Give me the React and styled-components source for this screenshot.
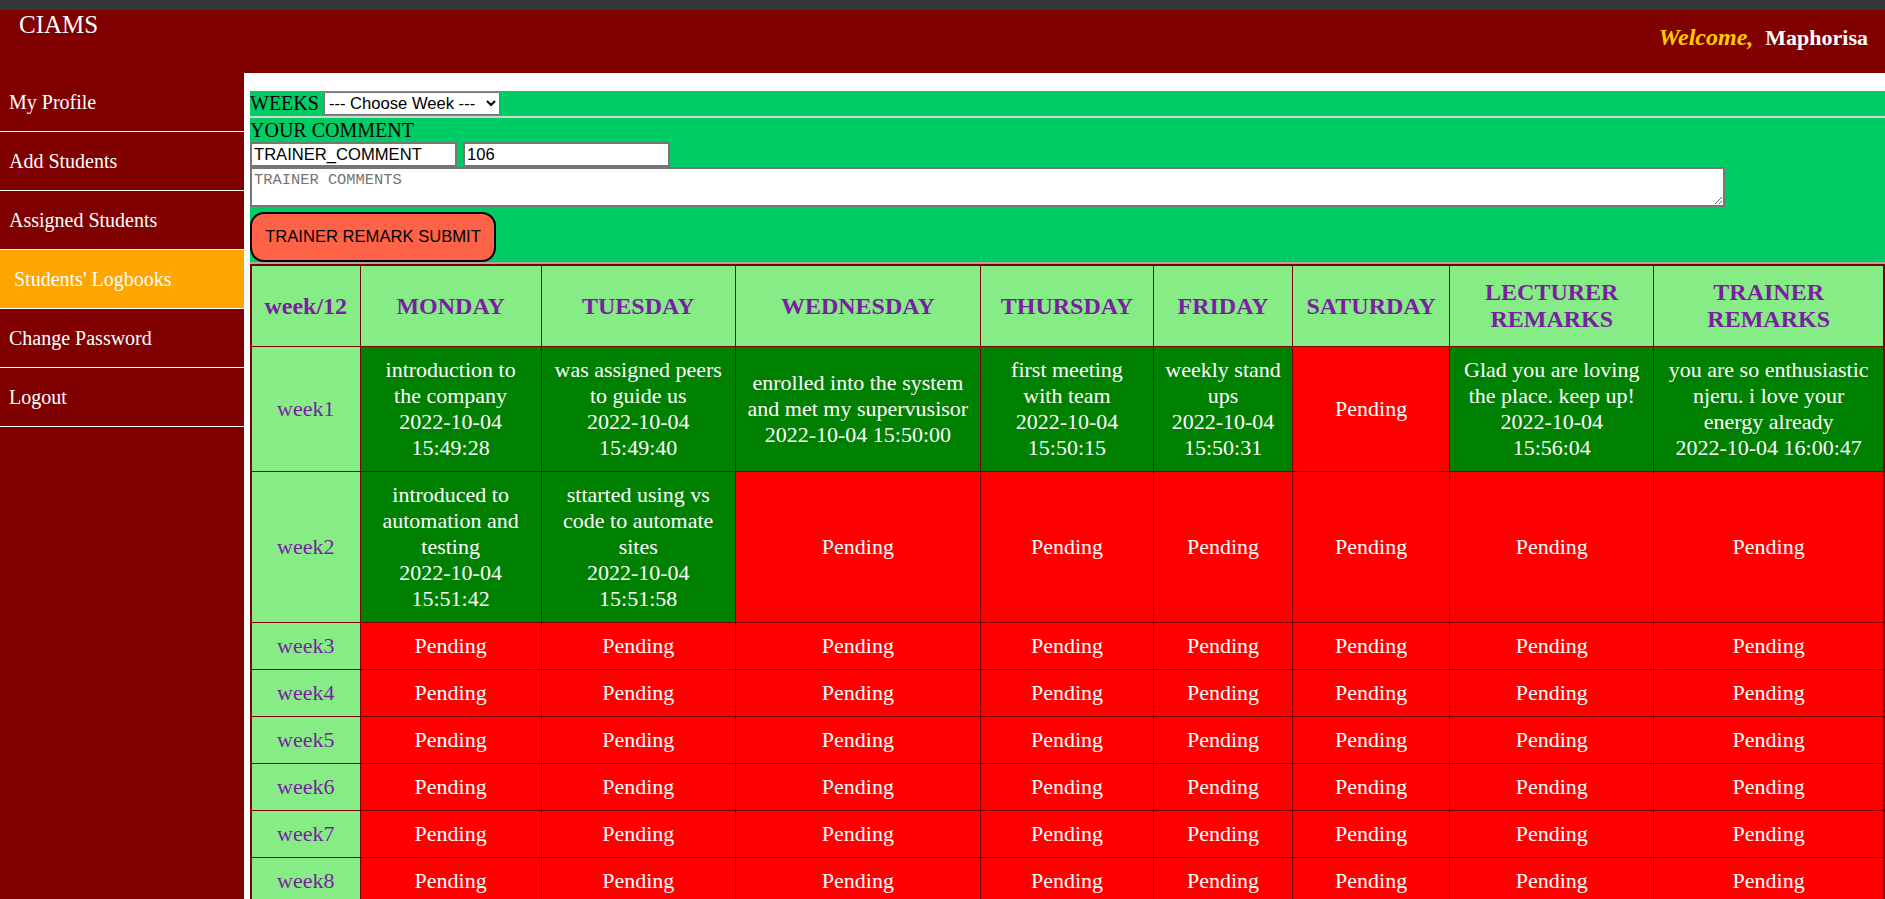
import React from 'react';
import styled, { createGlobalStyle } from 'styled-components';

const days = ['MONDAY', 'TUESDAY', 'WEDNESDAY', 'THURSDAY', 'FRIDAY', 'SATURDAY'];
const colWidths = [109, 181, 194, 245, 173, 139, 157, 204, 230];

const navLinks = ['My Profile', 'Add Students', 'Assigned Students', "Students' Logbooks", 'Change Password', 'Logout'];

const logbook = [
    {
        week: 'week1',
        entries: [
            { text: 'introduction to the company', date: '2022-10-04 15:49:28' },
            { text: 'was assigned peers to guide us', date: '2022-10-04 15:49:40' },
            { text: 'enrolled into the system and met my supervusisor', date: '2022-10-04 15:50:00' },
            { text: 'first meeting with team', date: '2022-10-04 15:50:15' },
            { text: 'weekly stand ups', date: '2022-10-04 15:50:31' },
            null,
            { text: 'Glad you are loving the place. keep up!', date: '2022-10-04 15:56:04' },
            { text: 'you are so enthusiastic njeru. i love your energy already', date: '2022-10-04 16:00:47' },
        ],
    },
    {
        week: 'week2',
        entries: [
            { text: 'introduced to automation and testing', date: '2022-10-04 15:51:42' },
            { text: 'sttarted using vs code to automate sites', date: '2022-10-04 15:51:58' },
            null, null, null, null, null, null,
        ],
    },
];

for (let i = 3; i <= 12; i++) {
    logbook.push({ week: 'week' + i, entries: Array(8).fill(null) });
}

const App = () => {
    return (
        <Page>
            <GlobalStyle />
            <ChromeStrip />
            <TopBar>
                <Brand>CIAMS</Brand>
                <Greeting>
                    <Welcome>Welcome,</Welcome>
                    <UserName>Maphorisa</UserName>
                </Greeting>
            </TopBar>
            <Body>
                <Sidebar>
                    {navLinks.map((link) => (
                        <NavItem key={link} $active={link === "Students' Logbooks"}>{link}</NavItem>
                    ))}
                </Sidebar>
                <Main>
                    <RemarkForm>
                        <WeeksRow>
                            <FormLabel>WEEKS</FormLabel>
                            <WeekSelect defaultValue="">
                                <option value="">--- Choose Week ---</option>
                                {logbook.map((row) => (
                                    <option key={row.week} value={row.week}>{row.week}</option>
                                ))}
                            </WeekSelect>
                        </WeeksRow>
                        <CommentLabel>YOUR COMMENT</CommentLabel>
                        <FieldRow>
                            <TextInput defaultValue="TRAINER_COMMENT" />
                            <TextInput defaultValue="106" />
                        </FieldRow>
                        <CommentBox placeholder="TRAINER COMMENTS" />
                        <SubmitButton>TRAINER REMARK SUBMIT</SubmitButton>
                    </RemarkForm>
                    <LogTable>
                        <colgroup>
                            {colWidths.map((w, i) => (
                                <col key={i} style={{ width: w }} />
                            ))}
                        </colgroup>
                        <thead>
                            <tr>
                                <HeadCell>week/12</HeadCell>
                                {days.map((d) => (
                                    <HeadCell key={d}>{d}</HeadCell>
                                ))}
                                <HeadCell>LECTURER REMARKS</HeadCell>
                                <HeadCell>TRAINER REMARKS</HeadCell>
                            </tr>
                        </thead>
                        <tbody>
                            {logbook.map((row) => (
                                <tr key={row.week}>
                                    <WeekCell>{row.week}</WeekCell>
                                    {row.entries.map((entry, i) => (
                                        <EntryCell key={i} $done={!!entry}>
                                            {entry ? (
                                                <>
                                                    {entry.text}
                                                    <br />
                                                    {entry.date}
                                                </>
                                            ) : 'Pending'}
                                        </EntryCell>
                                    ))}
                                </tr>
                            ))}
                        </tbody>
                    </LogTable>
                </Main>
            </Body>
        </Page>
    );
};

//Styles:
const GlobalStyle = createGlobalStyle`
    html, body {
        margin: 0;
        padding: 0;
        overflow: hidden;
    }
    body {
        font-family: 'Liberation Serif', 'Times New Roman', serif;
        background: #fff;
    }
    * {
        box-sizing: border-box;
    }
`;

const Page = styled.div`
    height: 100vh;
    display: flex;
    flex-direction: column;
    overflow: hidden;
`;

const ChromeStrip = styled.div`
    height: 10px;
    flex-shrink: 0;
    background: #35363a;
`;

const TopBar = styled.header`
    height: 63px;
    flex-shrink: 0;
    display: flex;
    justify-content: space-between;
    align-items: flex-start;
    padding: 0 17px 0 19px;
    background: #800000;
`;

const Brand = styled.div`
    color: #fff;
    font-size: 25px;
    line-height: 27px;
    margin-top: 1px;
`;

const Greeting = styled.div`
    margin-top: 14px;
    font-size: 22px;
    line-height: 26px;
    font-weight: bold;
`;

const Welcome = styled.span`
    color: #ffcc00;
    font-style: italic;
    font-size: 24px;
`;

const UserName = styled.span`
    color: #fff;
    margin-left: 12px;
`;

const Body = styled.div`
    flex: 1;
    display: flex;
    min-height: 0;
`;

const Sidebar = styled.nav`
    width: 244px;
    flex-shrink: 0;
    background: #800000;
`;

const NavItem = styled.div`
    height: 59px;
    display: flex;
    align-items: center;
    padding-left: ${(p) => (p.$active ? '14px' : '9px')};
    border-bottom: 1px solid #fff;
    background: ${(p) => (p.$active ? '#ffa500' : 'transparent')};
    color: #fff;
    font-size: 20px;
`;

const Main = styled.main`
    flex: 1;
    min-width: 0;
    padding: 18px 0 0 6px;
    background: #fff;
    overflow: hidden;
`;

const RemarkForm = styled.form`
    display: flex;
    flex-direction: column;
    align-items: flex-start;
    background: #00cc66;
    border-bottom: 2px solid #a9a9a9;
`;

const WeeksRow = styled.div`
    align-self: stretch;
    height: 27px;
    display: flex;
    align-items: center;
    gap: 5px;
    border-bottom: 2px solid #d6d6d6;
`;

const FormLabel = styled.span`
    color: #000;
    font-size: 20px;
    line-height: 23px;
`;

const WeekSelect = styled.select`
    width: 176px;
    height: 23px;
    font-family: 'Liberation Sans', Arial, sans-serif;
    font-size: 16.6px;
    color: #000;
    background: #fff;
    border: 1px solid #767676;
    border-radius: 0;
`;

const CommentLabel = styled.div`
    color: #000;
    font-size: 20px;
    line-height: 24px;
`;

const FieldRow = styled.div`
    display: flex;
    gap: 6px;
`;

const TextInput = styled.input`
    width: 207px;
    height: 25px;
    padding: 1px 2px;
    border: 2px solid #767676;
    font-family: 'Liberation Sans', Arial, sans-serif;
    font-size: 16.6px;
    color: #000;
    background: #fff;
`;

const CommentBox = styled.textarea`
    display: block;
    width: 1475px;
    height: 40px;
    padding: 2px;
    border: 2px solid #767676;
    font-family: 'Liberation Mono', 'DejaVu Sans Mono', monospace;
    font-size: 15.4px;
    background: #fff;

    &::placeholder {
        color: #757575;
    }
`;

const SubmitButton = styled.button`
    margin-top: 5px;
    width: 246px;
    height: 50px;
    background: #ff6347;
    border: 2px solid #000;
    border-radius: 14px;
    font-family: 'Liberation Sans', Arial, sans-serif;
    font-size: 16.6px;
    color: #000;
`;

const LogTable = styled.table`
    width: 1635px;
    table-layout: fixed;
    border-collapse: collapse;
    border: 2px solid #800000;
`;

const HeadCell = styled.th`
    padding: 13px 10px;
    border: 1px solid #800000;
    background: #86ec86;
    color: #7b1fa2;
    font-size: 24px;
    line-height: 27px;
    font-weight: bold;
    text-align: center;
`;

const WeekCell = styled.td`
    padding: 10px;
    border: 1px solid #800000;
    background: #86ec86;
    color: #7b1fa2;
    font-size: 22px;
    line-height: 26px;
    text-align: center;
`;

const EntryCell = styled.td`
    padding: 10px;
    border: 1px solid #800000;
    background: ${(p) => (p.$done ? '#008000' : '#ff0000')};
    color: #fff;
    font-size: 22px;
    line-height: 26px;
    text-align: center;
`;

export default App;
